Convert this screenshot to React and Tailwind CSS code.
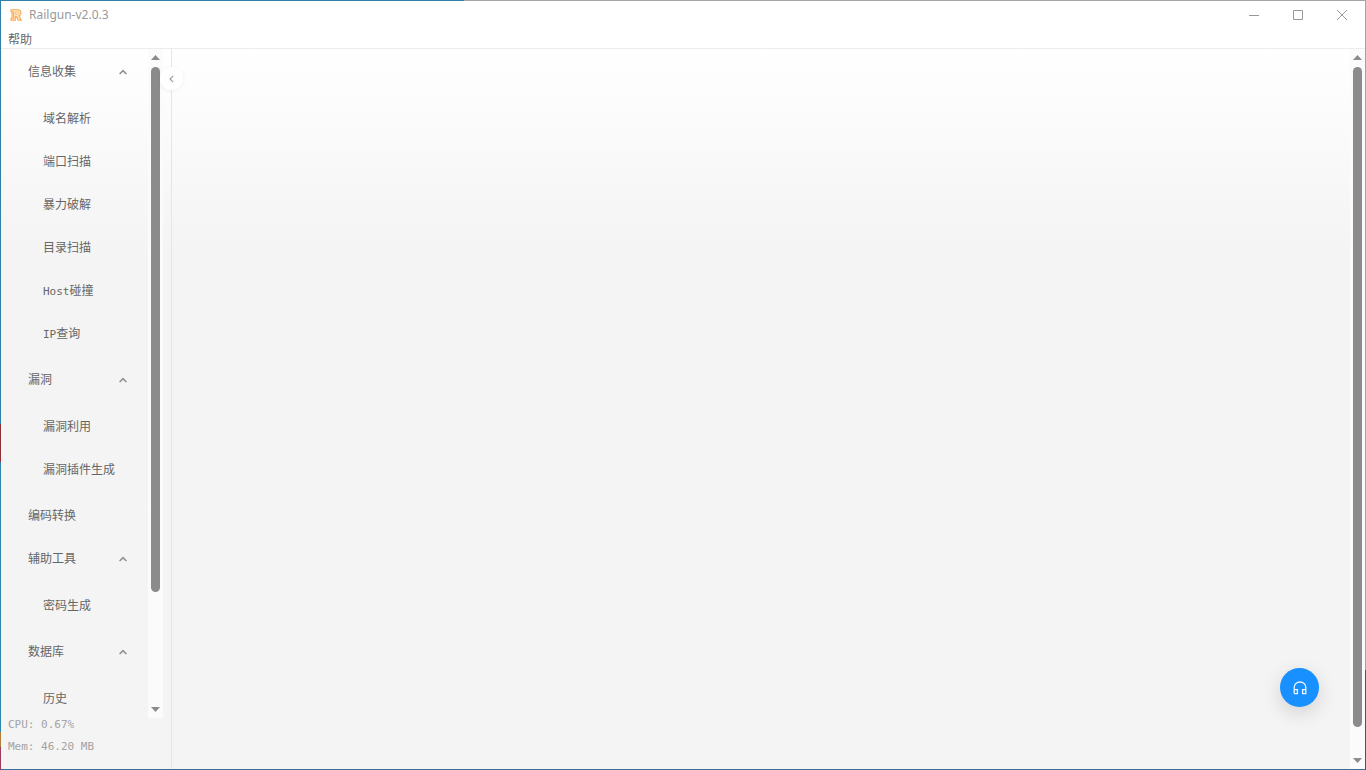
import { useState } from 'react';

const menu = [
  {
    label: '信息收集',
    children: [
      { label: '域名解析' },
      { label: '端口扫描' },
      { label: '暴力破解' },
      { label: '目录扫描' },
      { latin: 'Host', label: '碰撞' },
      { latin: 'IP', label: '查询' },
    ],
  },
  { label: '漏洞', children: [{ label: '漏洞利用' }, { label: '漏洞插件生成' }] },
  { label: '编码转换' },
  { label: '辅助工具', children: [{ label: '密码生成' }] },
  { label: '数据库', children: [{ label: '历史' }] },
];

function Logo() {
  return (
    <svg width="12" height="12" viewBox="0 0 12 12" fill="none" stroke="#f7ab55" aria-hidden="true">
      <path
        d="M1 .7H7.6C9.9.7 11 2 11 3.8 11 5.3 10.3 6.3 9.2 6.8L11.3 11.3H8.2L6.3 7.6H5.3V11.3H1V9.4H2V2.6H1Z"
        fill="#fde0b8"
        strokeWidth="1.1"
      />
      <path d="M3.6 2.4V9.8" strokeWidth=".9" />
      <path d="M5.6 3.1H7.4C8 3.1 8.3 3.5 8.3 4.1S8 5.1 7.4 5.1H5.6Z" fill="#ffffff" strokeWidth=".7" />
    </svg>
  );
}

function TitleBar() {
  return (
    <header className="flex h-7 shrink-0 items-center bg-white pr-px pl-[9px]">
      <Logo />
      <h1 className="ml-[7px] flex-1 font-['Noto_Sans',sans-serif] text-xs text-[#999999]">
        Railgun-v2.0.3
      </h1>
      <div className="flex h-full text-[#999999]">
        <button type="button" aria-label="最小化" className="flex w-11 items-center justify-center">
          <svg width="10" height="10" viewBox="0 0 10 10" stroke="currentColor">
            <path d="M0 5.5H10" />
          </svg>
        </button>
        <button type="button" aria-label="最大化" className="flex w-11 items-center justify-center">
          <svg width="10" height="10" viewBox="0 0 10 10" fill="none" stroke="currentColor">
            <path d="M.5.5H9.5V9.5H.5Z" />
          </svg>
        </button>
        <button type="button" aria-label="关闭" className="flex w-11 items-center justify-center">
          <svg width="10" height="10" viewBox="0 0 10 10" stroke="currentColor">
            <path d="M0 0L10 10M10 0L0 10" />
          </svg>
        </button>
      </div>
    </header>
  );
}

function ScrollBar({ thumb }) {
  return (
    <div className="flex w-[15px] shrink-0 flex-col items-center bg-[#fbfbfb]" aria-hidden="true">
      <svg className="mt-[6px] shrink-0" width="9" height="5" viewBox="0 0 9 5" fill="#8b8b8b">
        <path d="M0 5L4.5 0L9 5Z" />
      </svg>
      <div className="my-[7px] flex w-[9px] flex-1 flex-col">
        <div className={`w-full rounded-full bg-[#8b8b8b] ${thumb}`} />
      </div>
      <svg className="mb-[6px] shrink-0" width="9" height="5" viewBox="0 0 9 5" fill="#8b8b8b">
        <path d="M0 0L4.5 5L9 0Z" />
      </svg>
    </div>
  );
}

function MenuGroup({ item }) {
  const [open, setOpen] = useState(true);

  return (
    <li>
      <button
        type="button"
        aria-expanded={item.children ? open : undefined}
        onClick={() => setOpen(!open)}
        className="flex h-[39px] w-full items-center justify-between pr-[21px] pl-[27px] text-left"
      >
        {item.label}
        {item.children && (
          <svg
            className={open ? 'mt-[2px]' : 'mt-[2px] rotate-180'}
            width="8"
            height="6"
            viewBox="0 0 8 6"
            fill="none"
            stroke="#909090"
            strokeWidth="1.6"
          >
            <path d="M.6 5L4 1.6L7.4 5" />
          </svg>
        )}
      </button>
      {item.children && open && (
        <ul className="flex flex-col gap-1 pt-2 pb-[3px]">
          {item.children.map((child) => (
            <li key={child.label}>
              <a href="#" className="block h-[39px] pl-[42px] leading-[39px]">
                {child.latin && (
                  <span className="font-['DejaVu_Sans_Mono',monospace] text-[11px]">{child.latin}</span>
                )}
                {child.label}
              </a>
            </li>
          ))}
        </ul>
      )}
    </li>
  );
}

function Sidebar() {
  return (
    <aside className="relative flex w-[171px] shrink-0 flex-col border-r border-[#e6e6e6]">
      <div className="flex min-h-0 flex-1 pr-2">
        <nav className="min-w-0 flex-1 overflow-hidden pt-[2px]">
          <ul className="flex flex-col gap-1 text-xs text-[#666666]">
            {menu.map((item) => (
              <MenuGroup key={item.label} item={item} />
            ))}
          </ul>
        </nav>
        <ScrollBar thumb="h-[83%]" />
      </div>
      <div className="h-[51px] shrink-0 pl-[7px] font-['DejaVu_Sans_Mono',monospace] text-[11px] leading-[22px] text-[#a3a3a3]">
        <p className="-mt-1">CPU: 0.67%</p>
        <p>Mem: 46.20 MB</p>
      </div>
      <button
        type="button"
        aria-label="收起菜单"
        className="absolute top-[18px] -right-3 flex size-[23px] items-center justify-center rounded-full bg-white shadow-[0_1px_4px_rgba(0,0,0,0.06)]"
      >
        <svg width="5" height="8" viewBox="0 0 5 8" fill="none" stroke="#999999" strokeWidth="1.1">
          <path d="M4.2 .8L1 4L4.2 7.2" />
        </svg>
      </button>
    </aside>
  );
}

export default function App() {
  return (
    <div className="h-screen bg-[linear-gradient(90deg,#2f7fa8_34%,#a3a3a3_34%)] pt-px font-['Noto_Sans_CJK_SC',sans-serif]">
      <div className="h-full bg-[linear-gradient(180deg,#2f7fa8_55%,#8f3038_55%,#8f3038_60%,#2f86ad_60%,#2f86ad_95%,#b0813a_95%,#b0813a_97%,#a03a5c_97%)] pl-px">
        <div className="h-full bg-[linear-gradient(180deg,#a3a3a3_87%,#3b5680_87%)] pr-px">
          <div className="flex h-full flex-col border-b border-[#3b6f9c] bg-white">
            <TitleBar />
            <div className="flex h-5 shrink-0 items-center border-b border-[#ececec] bg-white pl-[7px]">
              <button type="button" className="text-xs text-[#666666]">
                帮助
              </button>
            </div>
            <div className="flex min-h-0 flex-1 bg-linear-to-b from-white to-[#f4f4f4] to-28%">
              <Sidebar />
              <main className="relative flex min-w-0 flex-1 justify-end">
                <ScrollBar thumb="h-[calc(100%-24px)]" />
                <button
                  type="button"
                  aria-label="客服"
                  className="absolute right-[46px] bottom-[62px] flex size-[39px] items-center justify-center rounded-full bg-[#1890ff] shadow-[0_6px_20px_rgba(0,0,0,0.14)]"
                >
                  <svg width="14" height="14" viewBox="0 0 14 14" fill="none" stroke="#e8f4ff" strokeWidth="1.3">
                    <path d="M1.2 12.6V6.6C1.2 3.2 3.8 1 7 1S12.8 3.2 12.8 6.6V12.6H9.6V8.6H12.8M1.2 8.6H4.4V12.6H1.2" />
                  </svg>
                </button>
              </main>
            </div>
          </div>
        </div>
      </div>
    </div>
  );
}
